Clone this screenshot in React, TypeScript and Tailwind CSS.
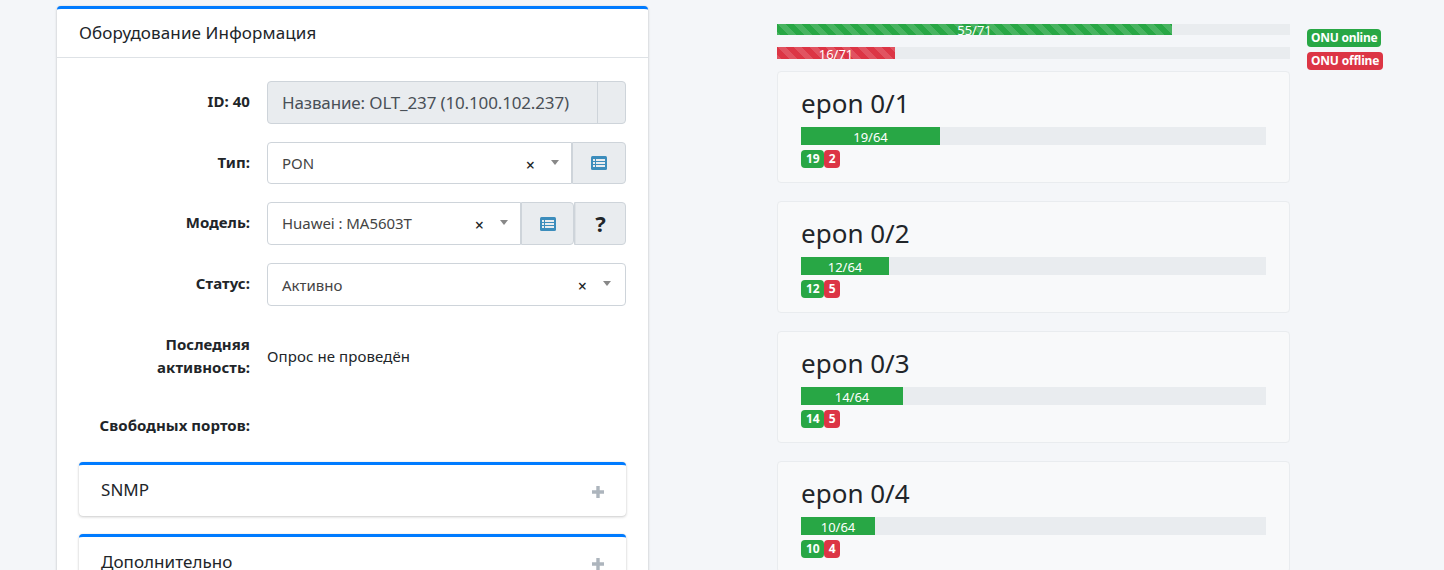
const font = { fontFamily: '"Noto Sans", "Open Sans", sans-serif' };

function ListIcon() {
  return (
    <svg viewBox="0 0 16 14" className="w-[16px] h-[14px]" aria-hidden="true">
      <rect x="0" y="0" width="16" height="14" rx="1.5" fill="#3c8dbc" />
      <g fill="#e9ecef">
        <rect x="2" y="3" width="2" height="2" />
        <rect x="5" y="3" width="9" height="2" />
        <rect x="2" y="6" width="2" height="2" />
        <rect x="5" y="6" width="9" height="2" />
        <rect x="2" y="9" width="2" height="2" />
        <rect x="5" y="9" width="9" height="2" />
      </g>
    </svg>
  );
}

function Plus() {
  return (
    <svg viewBox="0 0 14 14" className="w-[14px] h-[14px]" aria-hidden="true">
      <path d="M7 1v12M1 7h12" stroke="#adb5bd" strokeWidth="3.4" fill="none" />
    </svg>
  );
}

function Controls() {
  return (
    <div className="flex items-center shrink-0">
      <span className="text-[16px] leading-none text-[#212529] font-medium mt-[3px]">×</span>
      <span className="ml-[16px] mb-[2px] w-0 h-0 border-x-[4px] border-x-transparent border-t-[5px] border-t-[#888888]" />
    </div>
  );
}

function Row({ label, h, children }: { label: string; h: string; children: React.ReactNode }) {
  return (
    <div className={`flex items-center gap-[17px] ${h}`}>
      <div className="w-[171px] pb-[2px] text-right text-[15px] font-bold text-[#212529] leading-[23px] tracking-[0.05px]">{label}</div>
      <div className="w-[359px] flex h-full">{children}</div>
    </div>
  );
}

function Port({ name, width, text, on, off }: { name: string; width: number; text: string; on: number; off: number }) {
  return (
    <div className="w-[513px] h-[112px] border border-[#e9ecef] rounded-[4px] bg-[#f8f9fa] px-[23px] pt-[13px]">
      <div className="text-[26px] leading-[37px] text-[#212529]">{name}</div>
      <div className="mt-[5px] h-[18px] bg-[#e9ecef] w-[465px] flex">
        <div className="bg-[#28a745] text-white text-[13px] leading-[21px] text-center" style={{ width }}>{text}</div>
      </div>
      <div className="flex mt-[5px]">
        <span className="bg-[#28a745] text-white text-[12px] font-bold rounded-[4px] h-[18px] leading-[18px] px-[5px] tracking-[-0.2px]">{on}</span>
        <span className="bg-[#dc3545] text-white text-[12px] font-bold rounded-[4px] h-[18px] leading-[18px] px-[4.5px]">{off}</span>
      </div>
    </div>
  );
}

function Accordion({ title }: { title: string }) {
  return (
    <div className="rounded-[4px] border-t-[3px] border-[#007bff] bg-white shadow-[0_0_1px_rgba(0,0,0,.125),0_1px_3px_rgba(0,0,0,.2)] h-[54px] pl-[22px] pr-[21px] flex justify-between shrink-0">
      <span className="text-[17px] text-[#212529] mt-[12.5px] leading-[24px] tracking-[0.05px]">{title}</span>
      <span className="mt-[20px]"><Plus /></span>
    </div>
  );
}

const stripes = "bg-[linear-gradient(45deg,rgba(255,255,255,.15)_25%,transparent_25%,transparent_50%,rgba(255,255,255,.15)_50%,rgba(255,255,255,.15)_75%,transparent_75%,transparent)] bg-[length:16px_16px]";

export default function App() {
  return (
    <div style={font} className="w-[1444px] h-[570px] overflow-hidden bg-[#f4f6f9] flex items-start text-[#212529]">
      <div className="ml-[57px] mt-[6px] w-[591px] h-[600px] shrink-0 bg-white rounded-[4px] border-t-[3px] border-[#007bff] shadow-[0_0_1px_rgba(0,0,0,.125),0_1px_3px_rgba(0,0,0,.2)]">
        <div className="h-[49px] border-b border-[#dee2e6] pl-[22px] flex items-center text-[17px] text-[#212529] tracking-[0.12px]">
          Оборудование Информация
        </div>
        <div className="pl-[22px] pt-[23px] flex flex-col">
          <Row label="ID: 40" h="h-[43px]">
            <div className="flex-1 border border-[#ced4da] rounded-[4px] bg-[#e9ecef] flex text-[17px] text-[#495057]">
              <div className="flex-1 flex items-center pl-[14px] tracking-[-0.15px] whitespace-nowrap">Название: OLT_237 (10.100.102.237)</div>
              <div className="w-[28px] border-l border-[#ced4da]" />
            </div>
          </Row>
          <div className="h-[18px]" />
          <Row label="Тип:" h="h-[42px]">
            <div className="flex-1 border border-[#ced4da] rounded-l-[4px] flex items-center justify-between pl-[14px] pr-[12px] text-[15px] text-[#444444]">
              <span>PON</span>
              <Controls />
            </div>
            <div className="w-[54px] border border-[#ced4da] rounded-r-[4px] bg-[#e9ecef] flex items-center justify-center"><ListIcon /></div>
          </Row>
          <div className="h-[18px]" />
          <Row label="Модель:" h="h-[43px]">
            <div className="flex-1 border border-[#ced4da] rounded-l-[4px] flex items-center justify-between pl-[14px] pr-[12px] text-[15px] text-[#444444]">
              <span className="tracking-[-0.05px]">Huawei : MA5603T</span>
              <Controls />
            </div>
            <div className="w-[53px] border border-[#ced4da] rounded-r-[4px] bg-[#e9ecef] flex items-center justify-center"><ListIcon /></div>
            <div className="w-[52px] border border-[#ced4da] rounded-r-[4px] bg-[#e9ecef] flex items-center text-[22px] font-bold text-[#212529]">
              <span className="pl-[6px] border-l border-[#dee2e6] h-full" />
              <span className="flex-1 text-center pr-[6px]">?</span>
            </div>
          </Row>
          <div className="h-[18px]" />
          <Row label="Статус:" h="h-[43px]">
            <div className="flex-1 border border-[#ced4da] rounded-[4px] flex items-center justify-between pl-[14px] pr-[14px] text-[15px] text-[#444444]">
              <span className="pt-[1px]">Активно</span>
              <Controls />
            </div>
          </Row>
          <div className="h-[17px]" />
          <Row label="Последняя активность:" h="h-[67px]">
            <div className="flex items-center text-[15px] text-[#212529] tracking-[0.1px] pb-[1px]">Опрос не проведён</div>
          </Row>
          <div className="h-[24px]" />
          <Row label="Свободных портов:" h="h-[24px]">
            <div />
          </Row>
          <div className="h-[24px]" />
          <div className="w-[547px] flex flex-col gap-[18px]">
            <Accordion title="SNMP" />
            <Accordion title="Дополнительно" />
          </div>
        </div>
      </div>

      <div className="ml-[129px] pt-[24px] w-[513px] shrink-0 flex flex-col">
        <div className="relative">
          <div className="h-[11px] bg-[#e9ecef] flex">
            <div className={`bg-[#28a745] ${stripes} text-white text-[13px] leading-[13px] text-center overflow-hidden`} style={{ width: 395 }}>55/71</div>
          </div>
          <div className="mt-[12px] h-[12px] bg-[#e9ecef] flex">
            <div className={`bg-[#dc3545] ${stripes} text-white text-[13px] leading-[15px] text-center overflow-hidden`} style={{ width: 118 }}>16/71</div>
          </div>
          <div className="absolute left-[530px] top-[5px] flex flex-col items-start gap-[5px] whitespace-nowrap">
            <span className="bg-[#28a745] text-white text-[12px] font-bold rounded-[4px] h-[18px] leading-[18px] px-[4px] tracking-[-0.25px]">ONU online</span>
            <span className="bg-[#dc3545] text-white text-[12px] font-bold rounded-[4px] h-[18px] leading-[18px] px-[4px] tracking-[-0.2px]">ONU offline</span>
          </div>
        </div>
        <div className="mt-[12px] flex flex-col gap-[18px]">
          <Port name="epon 0/1" width={139} text="19/64" on={19} off={2} />
          <Port name="epon 0/2" width={88} text="12/64" on={12} off={5} />
          <Port name="epon 0/3" width={102} text="14/64" on={14} off={5} />
          <Port name="epon 0/4" width={74} text="10/64" on={10} off={4} />
        </div>
      </div>
    </div>
  );
}
